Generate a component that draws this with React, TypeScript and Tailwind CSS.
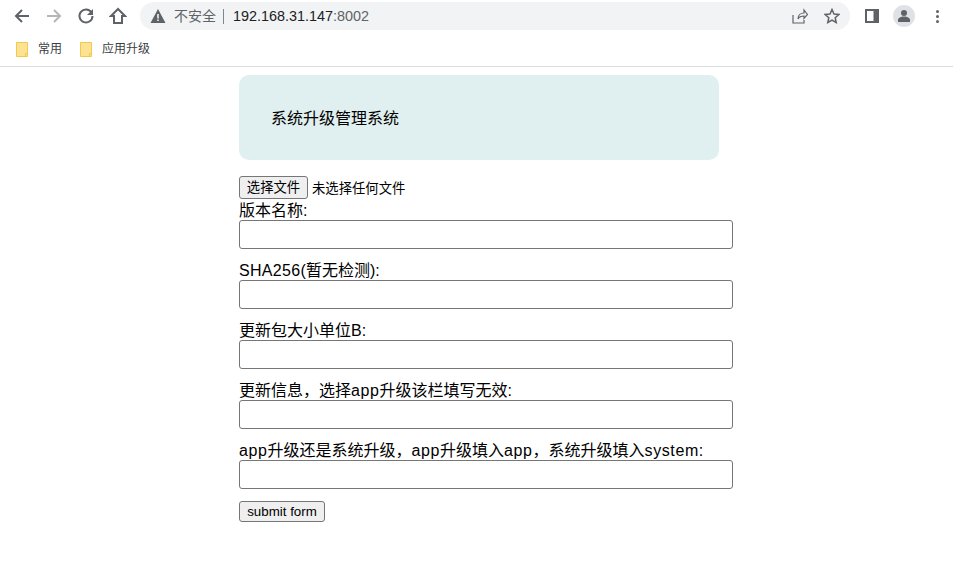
import type { ReactNode } from "react";

const FONT = "font-['Liberation_Sans','Noto_Sans_CJK_SC',sans-serif]";

function Folder() {
  return (
    <svg width="12" height="15" viewBox="0 0 12 15">
      <path d="M.5.5h11v14H.5z" fill="#fde293" stroke="#f2c94c" />
      <path d="M9.500 14.500v-3h2" fill="none" stroke="#f2c94c" />
    </svg>
  );
}

function Field({ label }: { label: ReactNode }) {
  return (
    <div className="flex flex-col">
      <label className="h-[20px] text-[16px] leading-[22px] text-black">{label}</label>
      <input
        type="text"
        className="h-[29px] w-[494px] rounded-[3px] border border-[#767676] bg-white"
      />
    </div>
  );
}

function Latin({ children }: { children: ReactNode }) {
  return <span className="tracking-[0.6px]">{children}</span>;
}

export default function App() {
  return (
    <div className={`${FONT} h-[582px] w-[953px] overflow-hidden bg-white`}>
      <div className="flex h-[32px] items-center">
        <div className="flex w-[140px] items-center">
          <svg className="ml-[13px]" width="18" height="18" viewBox="0 0 18 18" fill="none" stroke="#5f6368" strokeWidth="2">
            <path d="M16 9H3M9 3 3 9l6 6" />
          </svg>
          <svg className="ml-[14px]" width="18" height="18" viewBox="0 0 18 18" fill="none" stroke="#b4b6b9" strokeWidth="2">
            <path d="M2 9h13M9 3l6 6-6 6" />
          </svg>
          <svg className="ml-[14px]" width="18" height="18" viewBox="0 0 18 18" fill="none" stroke="#5f6368" strokeWidth="2">
            <path d="M14.500 5.500A6.500 6.500 0 1 0 15.500 9" />
            <path d="M16 2v6h-6z" fill="#5f6368" stroke="none" />
          </svg>
          <svg className="ml-[14px]" width="18" height="18" viewBox="0 0 18 18" fill="none" stroke="#5f6368" strokeWidth="2">
            <path d="M9 2 2 9h3v7h8V9h3z" />
          </svg>
        </div>
        <div className="flex h-[28px] w-[710px] items-center rounded-full bg-[#f1f3f4]">
          <svg className="ml-[10px]" width="16" height="14" viewBox="0 0 16 14">
            <path d="M8 0 15.500 14H.5z" fill="#5f6368" />
            <path d="M7.200 5h1.600v4.500H7.200zM7.200 10.500h1.600v1.600H7.200z" fill="#f1f3f4" />
          </svg>
          <span className="ml-[8px] pt-px text-[14px] text-[#5f6368]">不安全</span>
          <span className="ml-[7px] mr-[9px] h-[15px] w-px bg-[#80868b]" />
          <span className="pt-px text-[14.4px] text-[#202124]">
            192.168.31.147<span className="text-[#5f6368]">:8002</span>
          </span>
          <div className="ml-auto flex items-center gap-[16px] pr-[10px]">
            <svg width="16" height="16" viewBox="0 0 16 16" fill="none" stroke="#5f6368" strokeWidth="1.200">
              <path d="M1 7v8h11v-3M6 11c0-4 3-6 6-6V2l3.500 4.500-3.500 4V8c-2 0-5 1-6 3z" />
            </svg>
            <svg width="16" height="16" viewBox="0 0 16 16" fill="none" stroke="#5f6368" strokeWidth="1.500">
              <path d="m8 1.500 2 4.500 4.800.5-3.600 3.200 1 4.800L8 12l-4.200 2.500 1-4.800L1.200 6.500 6 6z" />
            </svg>
          </div>
        </div>
        <svg className="ml-[15px]" width="14" height="14" viewBox="0 0 14 14">
          <path d="M0 0h14v14H0z" fill="#5f6368" />
          <path d="M2 2h6.500v10H2z" fill="#fff" />
        </svg>
        <div className="ml-[14px] flex h-[22px] w-[22px] items-center justify-center rounded-full bg-[#dee1e6]">
          <svg width="14" height="14" viewBox="0 0 14 14" fill="#5f6368">
            <circle cx="7" cy="4" r="3" />
            <path d="M1 13v-2c0-2 3-3.500 6-3.500s6 1.500 6 3.500v2z" />
          </svg>
        </div>
        <div className="ml-[21px] flex flex-col gap-[2px]">
          <span className="h-[3px] w-[3px] rounded-full bg-[#5f6368]" />
          <span className="h-[3px] w-[3px] rounded-full bg-[#5f6368]" />
          <span className="h-[3px] w-[3px] rounded-full bg-[#5f6368]" />
        </div>
      </div>

      <div className="flex h-[35px] items-center border-b border-[#dadce0] text-[12px] text-[#3c4043]">
        <div className="ml-[16px] flex items-center">
          <Folder />
          <span className="ml-[10px]">常用</span>
        </div>
        <div className="ml-[18px] flex items-center">
          <Folder />
          <span className="ml-[10px]">应用升级</span>
        </div>
      </div>

      <div className="ml-[239px] pt-[8px] text-black">
        <div className="flex h-[85px] w-[480px] items-center rounded-[10px] bg-[#e0efef] pl-[32px] pt-[2px] text-[16px]">
          系统升级管理系统
        </div>
        <form className="mt-[16px] flex flex-col">
          <div className="flex h-[23px] items-center text-[13.33px]">
            <span className="flex h-[23px] w-[69px] items-center justify-center rounded-[3px] border border-[#767676] bg-[#efefef] pt-px">
              选择文件
            </span>
            <span className="ml-[4px] pt-[2px]">未选择任何文件</span>
          </div>
          <div className="mt-[1px] flex flex-col gap-[11px]">
            <Field label="版本名称:" />
            <Field label={<><span className="tracking-[0.3px]">SHA256(</span>暂无检测):</>} />
            <Field label="更新包大小单位B:" />
            <Field label={<>更新信息，选择<Latin>app</Latin>升级该栏填写无效:</>} />
            <Field
              label={
                <>
                  <Latin>app</Latin>升级还是系统升级，<Latin>app</Latin>升级填入<Latin>app</Latin>，系统升级填入<Latin>system:</Latin>
                </>
              }
            />
          </div>
          <button
            type="button"
            className="mt-[12px] h-[21px] w-[86px] rounded-[3px] border border-[#767676] bg-[#efefef] text-[13.33px] text-black"
          >
            submit form
          </button>
        </form>
      </div>
    </div>
  );
}
